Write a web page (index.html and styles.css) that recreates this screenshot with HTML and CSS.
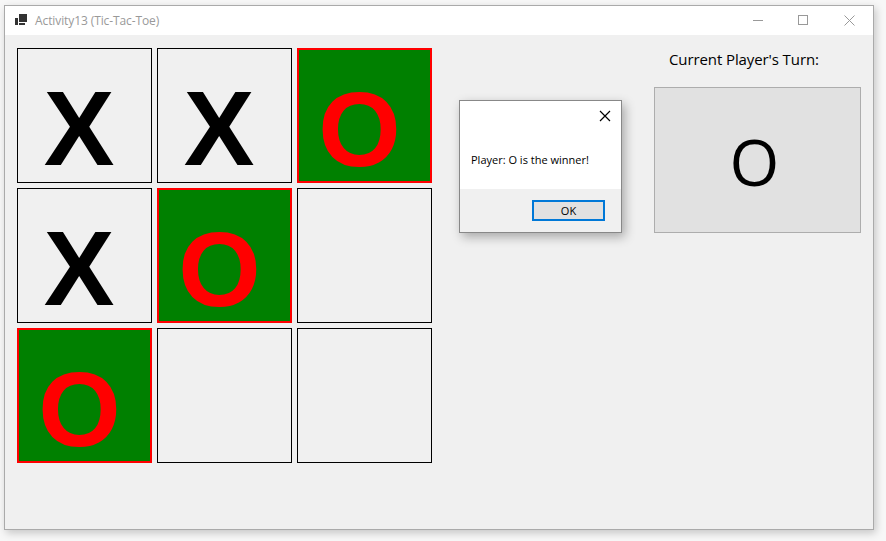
FILE: index.html
```html
<!DOCTYPE html>
<html>
<head>
<meta charset="utf-8">
<title>Activity13 (Tic-Tac-Toe)</title>
<link rel="stylesheet" href="styles.css">
</head>
<body>
<div class="window">
  <div class="titlebar">
    <svg class="app-icon" width="12" height="12" viewBox="0 0 12 12">
      <rect x="0" y="4" width="3" height="7" fill="#333"/>
      <rect x="4" y="0" width="8" height="8" fill="#333"/>
      <rect x="4" y="9" width="6" height="2" fill="#333"/>
    </svg>
    <span class="title">Activity13 (Tic-Tac-Toe)</span>
    <div class="controls">
      <svg class="ctl" width="46" height="29" viewBox="0 0 46 29"><line x1="18" y1="14.5" x2="28" y2="14.5" stroke="#999" stroke-width="1"/></svg>
      <svg class="ctl" width="46" height="29" viewBox="0 0 46 29"><rect x="17.5" y="9.5" width="9" height="9" fill="none" stroke="#999" stroke-width="1"/></svg>
      <svg class="ctl" width="46" height="29" viewBox="0 0 46 29"><path d="M17.5 9.5 L27.5 19.5 M27.5 9.5 L17.5 19.5" stroke="#999" stroke-width="1"/></svg>
    </div>
  </div>
  <div class="client">
    <div class="board">
      <div class="cell"><span class="x">X</span></div>
      <div class="cell"><span class="x">X</span></div>
      <div class="cell win"><span class="o">O</span></div>
      <div class="cell"><span class="x">X</span></div>
      <div class="cell win"><span class="o">O</span></div>
      <div class="cell"></div>
      <div class="cell win"><span class="o">O</span></div>
      <div class="cell"></div>
      <div class="cell"></div>
    </div>
    <div class="side">
      <div class="turn-label">Current Player's Turn:</div>
      <div class="turn-box">O</div>
    </div>
    <div class="dialog">
      <div class="dialog-top">
        <svg class="dlg-close" width="12" height="12" viewBox="0 0 12 12"><path d="M1 1 L11 11 M11 1 L1 11" stroke="#000" stroke-width="1.2"/></svg>
        <div class="dialog-msg">Player: O is the winner!</div>
      </div>
      <div class="dialog-bottom">
        <button class="ok">OK</button>
      </div>
    </div>
  </div>
</div>
</body>
</html>
```
FILE: styles.css
```css
html, body {
  margin: 0;
  padding: 0;
  background: #f7f7f7;
}
body {
  width: 886px;
  height: 541px;
  overflow: hidden;
  font-family: "Open Sans", "Noto Sans", sans-serif;
}
.window {
  margin: 5px 0 0 4px;
  width: 868px;
  height: 523px;
  border: 1px solid #aaaaaa;
  background: #f0f0f0;
  box-shadow: 2px 3px 8px rgba(0,0,0,0.2);
  display: flex;
  flex-direction: column;
}
.titlebar {
  height: 29px;
  background: #ffffff;
  display: flex;
  align-items: center;
  flex: none;
}
.app-icon {
  margin-left: 10px;
  margin-top: -1px;
}
.title {
  margin-left: 8px;
  font-size: 12px;
  color: #999999;
  letter-spacing: -0.1px;
}
.controls {
  margin-left: auto;
  display: flex;
}
.ctl { display: block; }
.client {
  position: relative;
  flex: 1;
  display: flex;
  padding: 13px 0 0 12px;
}
.board {
  display: grid;
  grid-template-columns: repeat(3, 135px);
  grid-template-rows: repeat(3, 135px);
  gap: 5px;
  align-self: flex-start;
}
.cell {
  box-sizing: border-box;
  border: 1px solid #000;
  background: #f0f0f0;
  display: flex;
  align-items: flex-start;
  justify-content: center;
  padding: 26px 11px 0 0;
  font-family: "Liberation Sans", Arial, sans-serif;
  font-weight: bold;
  font-size: 106px;
  line-height: 106px;
}
.cell.win {
  background: #008000;
  border: 2px solid #ff0000;
  padding: 25px 10px 0 0;
}
.x { color: #000; }
.o { color: #ff0000; margin-top: 1px; }
.side {
  margin-left: 222px;
  display: flex;
  flex-direction: column;
}
.turn-label {
  font-size: 15px;
  color: #000;
  margin-top: 1px;
  margin-left: 15px;
  height: 38px;
  line-height: 20px;
  letter-spacing: -0.1px;
}
.turn-box {
  box-sizing: border-box;
  width: 207px;
  height: 146px;
  background: #e1e1e1;
  border: 1px solid #adadad;
  display: flex;
  align-items: center;
  justify-content: center;
  font-size: 64px;
  font-family: "Open Sans", sans-serif;
  color: #000;
  padding: 2px 6px 0 0;
}
.dialog {
  position: absolute;
  left: 454px;
  top: 65px;
  width: 161px;
  height: 131px;
  border: 1px solid #888;
  background: #fff;
  box-shadow: 3px 4px 10px rgba(0,0,0,0.3);
  display: flex;
  flex-direction: column;
}
.dialog-top {
  position: relative;
  height: 88px;
  background: #fff;
}
.dlg-close {
  position: absolute;
  right: 10px;
  top: 9px;
}
.dialog-msg {
  position: absolute;
  left: 11px;
  top: 51px;
  font-size: 11px;
  color: #000;
  white-space: nowrap;
}
.dialog-bottom {
  flex: 1;
  background: #f0f0f0;
  display: flex;
  justify-content: flex-end;
  align-items: flex-start;
  padding: 11px 16px 0 0;
}
.ok {
  box-sizing: border-box;
  width: 73px;
  height: 21px;
  border: 2px solid #0078d7;
  background: #e1e1e1;
  font-family: "Open Sans", sans-serif;
  font-size: 11px;
  color: #000;
  padding: 0;
  line-height: 16px;
}
```
